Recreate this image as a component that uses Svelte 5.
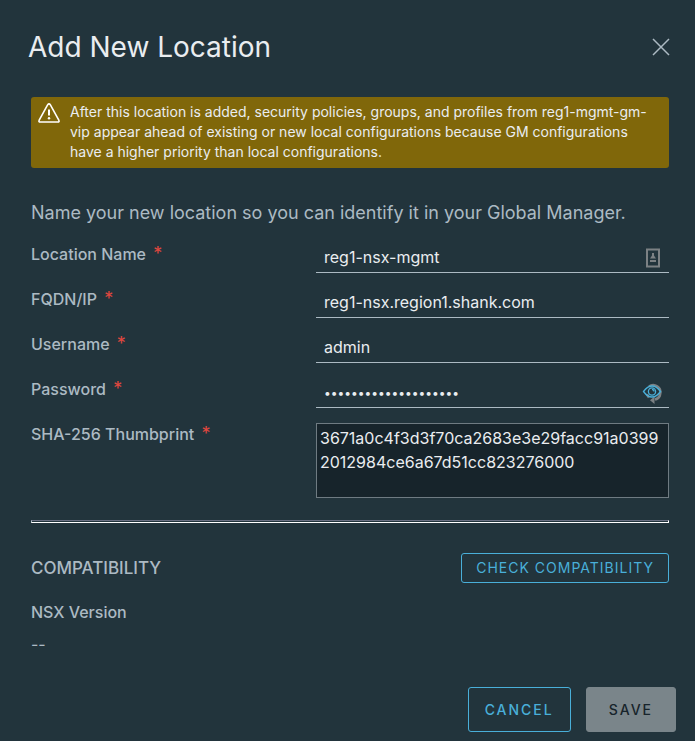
<script lang="ts">
  let fields = [
    { id: 'name', label: 'Location Name', type: 'text', value: 'reg1-nsx-mgmt', icon: 'autofill' },
    { id: 'fqdn', label: 'FQDN/IP', type: 'text', value: 'reg1-nsx.region1.shank.com', icon: '' },
    { id: 'username', label: 'Username', type: 'text', value: 'admin', icon: '' },
    { id: 'password', label: 'Password', type: 'password', value: 'x'.repeat(20), icon: 'reveal' }
  ];
  let thumbprint = '3671a0c4f3d3f70ca2683e3e29facc91a03992012984ce6a67d51cc823276000';
  let showPassword = false;
</script>

<div class="modal">
  <header>
    <h1>Add New Location</h1>
    <button class="close" type="button" aria-label="Close">
      <svg viewBox="0 0 18 18" width="18" height="18"><path d="M1 1l16 16M17 1l-16 16" /></svg>
    </button>
  </header>

  <form>
    <div class="alert" role="alert">
      <svg viewBox="0 0 22 20" width="22" height="20">
        <path class="line" d="M9.6 1.9 1.2 17.2q-.8 1.8 1 1.8h17.6q1.8 0 1-1.8L12.4 1.9q-1.4-2-2.8 0z" />
        <path class="mark" d="M11 6.5v6" />
        <circle cx="11" cy="15.3" r="1.2" />
      </svg>
      <p>After this location is added, security policies, groups, and profiles from reg1-mgmt-gm-vip appear ahead of existing or new local configurations because GM configurations have a higher priority than local configurations.</p>
    </div>

    <p class="intro">Name your new location so you can identify it in your Global Manager.</p>

    {#each fields as field}
      <div class="row">
        <label for={field.id}>{field.label} <span class="required">*</span></label>
        <div class="control">
          <input
            id={field.id}
            type={field.type === 'password' && showPassword ? 'text' : field.type}
            value={field.value}
          />
          {#if field.icon === 'autofill'}
            <svg class="suffix" viewBox="0 0 22 22" width="22" height="22">
              <rect class="card" x="5" y="2.5" width="12" height="17" />
              <path class="person" d="M10 6h2v2.5l2 3H8l2-3zM8 13h6v2H8z" />
            </svg>
          {:else if field.icon === 'reveal'}
            <button class="suffix" type="button" aria-label="Show password" on:click={() => (showPassword = !showPassword)}>
              <svg viewBox="0 0 22 22" width="22" height="22">
                <path class="hook" d="M7 4.5a7.3 7.3 0 1 1 6 13M5 12.5l2 3" />
                <path class="arrow" d="M12.5 14.5V22L8 18.2z" />
                <path class="eye" d="M1.5 9.5Q5.5 4 10 4t8.500 5.5Q14.5 15 10 15T1.5 9.5z" />
                <circle class="eye" cx="10" cy="9.5" r="3.6" />
                <path class="eye" d="M10 7.5a2 2 0 0 1 2 2" />
              </svg>
            </button>
          {/if}
        </div>
      </div>
    {/each}

    <div class="row">
      <label for="thumbprint">SHA-256 Thumbprint <span class="required">*</span></label>
      <textarea id="thumbprint" spellcheck="false" bind:value={thumbprint}></textarea>
    </div>

    <hr />

    <section class="compat">
      <h2>COMPATIBILITY</h2>
      <button class="btn small" type="button">CHECK COMPATIBILITY</button>
    </section>
    <dl>
      <dt>NSX Version</dt>
      <dd>--</dd>
    </dl>
  </form>

  <footer>
    <button class="btn" type="button">CANCEL</button>
    <button class="btn save" type="button" disabled>SAVE</button>
  </footer>
</div>

<style>
  :global(body) {
    margin: 0;
    background: #22343c;
  }
  .modal {
    box-sizing: border-box;
    min-height: 100vh;
    padding: 31px 19px 9px 28px;
    background: #22343c;
    color: #acbac3;
    font: 16px/24px Inter, "Open Sans", sans-serif;
  }
  button, input, textarea {
    font: inherit;
  }
  h1, h2, p, dl, dd {
    margin: 0;
    font-weight: 400;
  }
  header {
    display: flex;
    justify-content: space-between;
    align-items: center;
    padding-right: 6px;
  }
  h1 {
    color: #eaedf0;
    font-size: 28px;
    line-height: 32px;
  }
  .close {
    display: flex;
    padding: 0;
    border: 0;
    background: none;
    cursor: pointer;
  }
  .close path {
    stroke: #acbac3;
    stroke-width: 1.5;
  }
  form {
    padding: 34px 7px 0 3px;
  }
  .alert {
    display: flex;
    gap: 10px;
    padding: 5px 20px 6px 7px;
    border-radius: 3px;
    background: #80670a;
    color: #eaedf0;
    font-size: 14px;
    line-height: 20px;
  }
  .alert svg {
    flex: none;
    margin-top: 1px;
  }
  .alert .line, .alert .mark {
    fill: none;
    stroke: #fff;
    stroke-width: 1.6;
  }
  .alert .mark {
    stroke-width: 2;
  }
  .alert circle {
    fill: #fff;
  }
  .intro {
    margin: 33px 0 17px;
    font-size: 18px;
  }
  .row {
    display: grid;
    grid-template-columns: 285px 1fr;
    align-items: start;
    margin-bottom: 14px;
  }
  label, dt, h2 {
    font-weight: 500;
  }
  .required {
    margin-left: 3px;
    color: #e0473f;
    font-size: 18px;
    font-weight: 400;
    line-height: 20px;
  }
  .control {
    position: relative;
  }
  input {
    box-sizing: border-box;
    display: block;
    width: 100%;
    height: 31px;
    padding: 0 34px 0 8px;
    border: 0;
    border-bottom: 1px solid #acbac3;
    background: none;
    color: #eaedf0;
    outline: none;
  }
  input[type='password'] {
    font-size: 12px;
  }
  .suffix {
    position: absolute;
    top: 5px;
    right: 5px;
    width: 22px;
    height: 22px;
    padding: 0;
    border: 0;
    background: none;
  }
  .card {
    fill: none;
    stroke: #7c8184;
    stroke-width: 2;
  }
  .person, .arrow {
    fill: #7c8184;
  }
  .hook {
    fill: none;
    stroke: #7c8184;
    stroke-width: 2.5;
  }
  .eye {
    fill: none;
    stroke: #49afd9;
    stroke-width: 1.3;
  }
  textarea {
    box-sizing: border-box;
    width: 100%;
    height: 75px;
    margin-top: 1px;
    padding: 2px 3px;
    border: 1px solid #6f7b82;
    border-radius: 0;
    background: #17242b;
    color: #eaedf0;
    word-break: break-all;
    resize: none;
    outline: none;
  }
  hr {
    height: 1px;
    margin: 22px 0 30px;
    border: 1px solid;
    border-color: #6a7083 #fff #fff #acbac3;
  }
  .compat {
    display: flex;
    justify-content: space-between;
    align-items: center;
  }
  h2 {
    font-size: 17px;
  }
  .btn {
    height: 45px;
    padding: 0 16px;
    border: 1px solid #49afd9;
    border-radius: 3px;
    background: none;
    color: #49afd9;
    font-size: 14px;
    font-weight: 500;
    letter-spacing: 2px;
    cursor: pointer;
  }
  .small {
    height: 30px;
    padding: 0 14px;
    font-weight: 400;
    letter-spacing: 1px;
  }
  .save {
    padding: 0 22px;
    border-color: #7a858a;
    background: #7a858a;
    color: #17242b;
    cursor: default;
  }
  dl {
    margin-top: 17px;
  }
  dd {
    margin-top: 8px;
  }
  footer {
    display: flex;
    justify-content: flex-end;
    gap: 15px;
    margin-top: 31px;
  }
</style>
